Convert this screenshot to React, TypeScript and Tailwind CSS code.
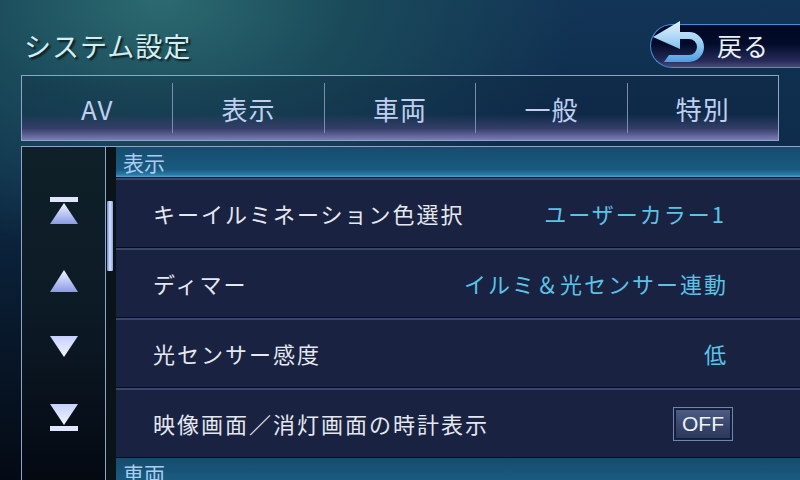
import React from "react";

const font = "font-['Noto_Sans_CJK_JP','Noto_Sans',sans-serif]";

function TriUp({ bar }: { bar?: boolean }) {
  return (
    <svg width="28" height={bar ? 27 : 22} viewBox={bar ? "0 0 28 27" : "0 0 28 22"}>
      <defs>
        <linearGradient id="tu" x1="0" y1="0" x2="0" y2="1">
          <stop offset="0" stopColor="#f4f6ff" />
          <stop offset="1" stopColor="#8a9ae6" />
        </linearGradient>
      </defs>
      {bar && <rect x="0" y="0" width="28" height="5" fill="#dfe6ff" />}
      <polygon points={bar ? "14,6 28,27 0,27" : "14,0 28,22 0,22"} fill="url(#tu)" />
    </svg>
  );
}

function TriDown({ bar }: { bar?: boolean }) {
  return (
    <svg width="28" height={bar ? 27 : 21} viewBox={bar ? "0 0 28 27" : "0 0 28 21"}>
      <defs>
        <linearGradient id="td" x1="0" y1="0" x2="0" y2="1">
          <stop offset="0" stopColor="#c6d0ff" />
          <stop offset="1" stopColor="#f4f6ff" />
        </linearGradient>
      </defs>
      <polygon points="0,0 28,0 14,21" fill="url(#td)" />
      {bar && <rect x="0" y="22" width="28" height="5" fill="#dfe6ff" />}
    </svg>
  );
}

function Row({ label, children }: { label: string; children: React.ReactNode }) {
  return (
    <div className="h-[70px] shrink-0 flex items-center justify-between border-t-2 border-t-[#36476a] border-b border-b-[#080c1a] bg-[#1a2242] pl-[37px]">
      <span className="text-[22px] tracking-[2px] text-[#e4e8ef]">{label}</span>
      {children}
    </div>
  );
}

function SectionHeader({ text }: { text: string }) {
  return (
    <div className="h-[31px] shrink-0 flex items-center pl-[7px] bg-[linear-gradient(180deg,#164c6e_0%,#1a5a80_75%,#2a7aa6_92%,#4aa6d0_100%)] border-b border-b-[#0a1424]">
      <span className="text-[21px] leading-none text-[#a9cdf0]">{text}</span>
    </div>
  );
}

export default function App() {
  const tabs = ["AV", "表示", "車両", "一般", "特別"];
  return (
    <div
      className={`${font} w-[800px] h-[480px] overflow-hidden relative bg-[radial-gradient(ellipse_420px_260px_at_20%_0%,#2c6a70_0%,#1a4a5a_45%,rgba(16,48,80,0)_100%),linear-gradient(180deg,#123456_0%,#0d2a48_35%,#08182a_70%,#040a14_100%)]`}
    >
      {/* header */}
      <div className="h-[75px] flex items-end justify-between pb-[7px]">
        <div className="h-[43px] flex items-center pl-[24px] text-[27px] tracking-[1px] text-[#d4eef0] [text-shadow:2px_2px_2px_rgba(0,0,0,0.7)]">
          システム設定
        </div>
        <div className="relative w-[150px] h-[44px] rounded-l-full border border-r-0 border-[#3f90d8] bg-[linear-gradient(180deg,#000a26_0%,#020c2a_45%,#262a58_85%,#4a4a7a_100%)] flex items-center pl-[66px]">
          <svg className="absolute left-[1px] -top-[5px]" width="56" height="46" viewBox="651 20 56 46">
            <defs>
              <linearGradient id="bk" x1="0" y1="0" x2="0" y2="1">
                <stop offset="0" stopColor="#e4f4ff" />
                <stop offset="0.5" stopColor="#9fd0f4" />
                <stop offset="1" stopColor="#4e9ee0" />
              </linearGradient>
            </defs>
            <path
              d="M652 37 L679 21 L679 32 L688 32 A15 15 0 0 1 688 62 L663 62 L668 55 L688 55 A8 8 0 0 0 688 39 L679 39 L679 49 Z"
              fill="url(#bk)"
            />
          </svg>
          <span className="text-[25px] tracking-[1px] text-[#eaf2fa]">戻る</span>
        </div>
      </div>

      {/* tabs */}
      <div className="ml-[21px] w-[758px] h-[66px] border border-[#8ea4ca] flex items-center bg-[linear-gradient(180deg,rgba(10,30,50,0.25)_0%,rgba(14,34,64,0.3)_60%,#343e68_82%,#7c7cb4_100%)]">
        {tabs.map((t, i) => (
          <div
            key={t}
            className={`flex-1 h-[50px] flex items-center justify-center text-[26px] tracking-[1px] text-[#c0cef0] ${
              i > 0 ? "border-l border-[#7a8cb0]" : ""
            }`}
          >
            {t}
          </div>
        ))}
      </div>

      {/* list area */}
      <div className="mt-[5px] ml-[21px] h-[334px] flex border-t border-l border-[#8ea4ca]">
        <div className="w-[84px] shrink-0 border-r border-[#8ea4ca] flex flex-col items-center bg-[linear-gradient(180deg,#0f2028_0%,#0c1a26_50%,#040912_100%)]">
          <div className="mt-[50px]">
            <TriUp bar />
          </div>
          <div className="mt-[46px]">
            <TriUp />
          </div>
          <div className="mt-[44px]">
            <TriDown />
          </div>
          <div className="mt-[47px]">
            <TriDown bar />
          </div>
        </div>
        <div className="w-[10px] shrink-0 bg-[#0a1418] pt-[54px] pl-[1px]">
          <div className="w-[6px] h-[70px] rounded-[1px] bg-[linear-gradient(90deg,#6e86c8_0%,#d6e2ff_50%,#8aa0d8_100%)]" />
        </div>
        <div className="flex-1 flex flex-col overflow-hidden">
          <SectionHeader text="表示" />
          <Row label="キーイルミネーション色選択">
            <span className="pr-[74px] text-[22px] tracking-[2px] text-[#5cc2e6]">ユーザーカラー1</span>
          </Row>
          <Row label="ディマー">
            <span className="pr-[72px] text-[22px] tracking-[2px] text-[#5cc2e6]">イルミ＆光センサー連動</span>
          </Row>
          <Row label="光センサー感度">
            <span className="pr-[72px] text-[22px] tracking-[2px] text-[#5cc2e6]">低</span>
          </Row>
          <Row label="映像画面／消灯画面の時計表示">
            <div className="mr-[67px] w-[60px] h-[34px] border border-[#6c86b0] p-[1px] bg-[#1a2242]">
              <div className="w-full h-full border border-[#141a30] bg-[linear-gradient(180deg,#4c5c82_0%,#3a4870_50%,#2c3858_100%)] flex items-center justify-center text-[21px] leading-none text-[#eef2f8] font-['Liberation_Sans',sans-serif]">
                OFF
              </div>
            </div>
          </Row>
          <SectionHeader text="車両" />
        </div>
      </div>
    </div>
  );
}
